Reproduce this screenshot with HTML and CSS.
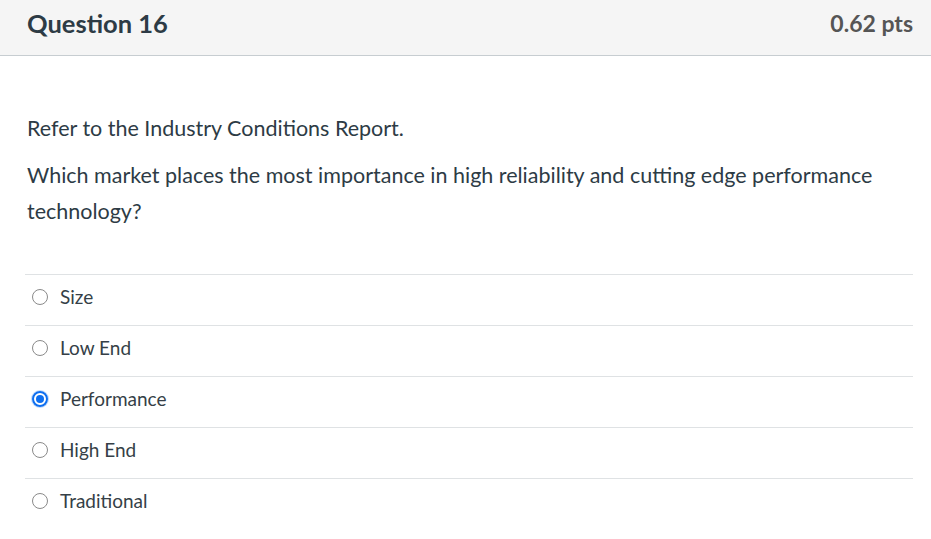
FILE: index.html
```html
<!DOCTYPE html>
<html>
<head>
<meta charset="utf-8">
<link rel="stylesheet" href="styles.css">
</head>
<body>
<div class="question">
  <div class="header">
    <h2 class="title">Question 16</h2>
    <span class="points">0.62 pts</span>
  </div>
  <div class="content">
    <div class="text">
      <p>Refer to the Industry Conditions Report.</p>
      <p>Which market places the most importance in high reliability and cutting edge performance technology?</p>
    </div>
    <div class="answers">
      <label class="answer"><span class="radio"></span><span class="label">Size</span></label>
      <label class="answer"><span class="radio"></span><span class="label">Low End</span></label>
      <label class="answer"><span class="radio checked"></span><span class="label">Performance</span></label>
      <label class="answer"><span class="radio"></span><span class="label">High End</span></label>
      <label class="answer"><span class="radio"></span><span class="label">Traditional</span></label>
    </div>
  </div>
</div>
</body>
</html>
```
FILE: styles.css
```css
html, body {
  margin: 0;
  padding: 0;
  background: #fff;
  font-family: Lato, "Liberation Sans", sans-serif;
  color: #2d3b45;
}
.header {
  height: 56px;
  background: #f5f5f5;
  border-bottom: 1px solid #c7cdd1;
  display: flex;
  align-items: center;
  justify-content: space-between;
  padding: 0 18px 9px 27px;
  box-sizing: border-box;
}
.title {
  margin: 0;
  font-size: 25.5px;
  font-weight: 700;
  color: #2d3b45;
}
.points {
  font-size: 23px;
  font-weight: 700;
  color: #555;
}
.content {
  padding: 54px 18px 0 25px;
}
.text {
  padding-left: 2px;
  font-size: 21.5px;
  line-height: 36px;
}
.text p {
  margin: 0 0 11px 0;
}
.answers {
  margin-top: 45px;
}
.answer {
  display: flex;
  align-items: center;
  height: 51px;
  border-top: 1px solid #dfe2e4;
  padding: 0 0 7px 7px;
  box-sizing: border-box;
}
.radio {
  width: 16px;
  height: 16px;
  border: 1.5px solid #8a8a8a;
  border-radius: 50%;
  box-sizing: border-box;
  margin-right: 12px;
  position: relative;
  flex: none;
}
.radio.checked {
  border: 2px solid #0e6ff0;
  box-shadow: 0 0 0 1px rgba(14, 111, 240, 0.25);
}
.radio.checked::after {
  content: "";
  position: absolute;
  left: 2px;
  top: 2px;
  width: 8px;
  height: 8px;
  border-radius: 50%;
  background: #0e6ff0;
}
.label {
  font-size: 19px;
  color: #353f47;
}
```
